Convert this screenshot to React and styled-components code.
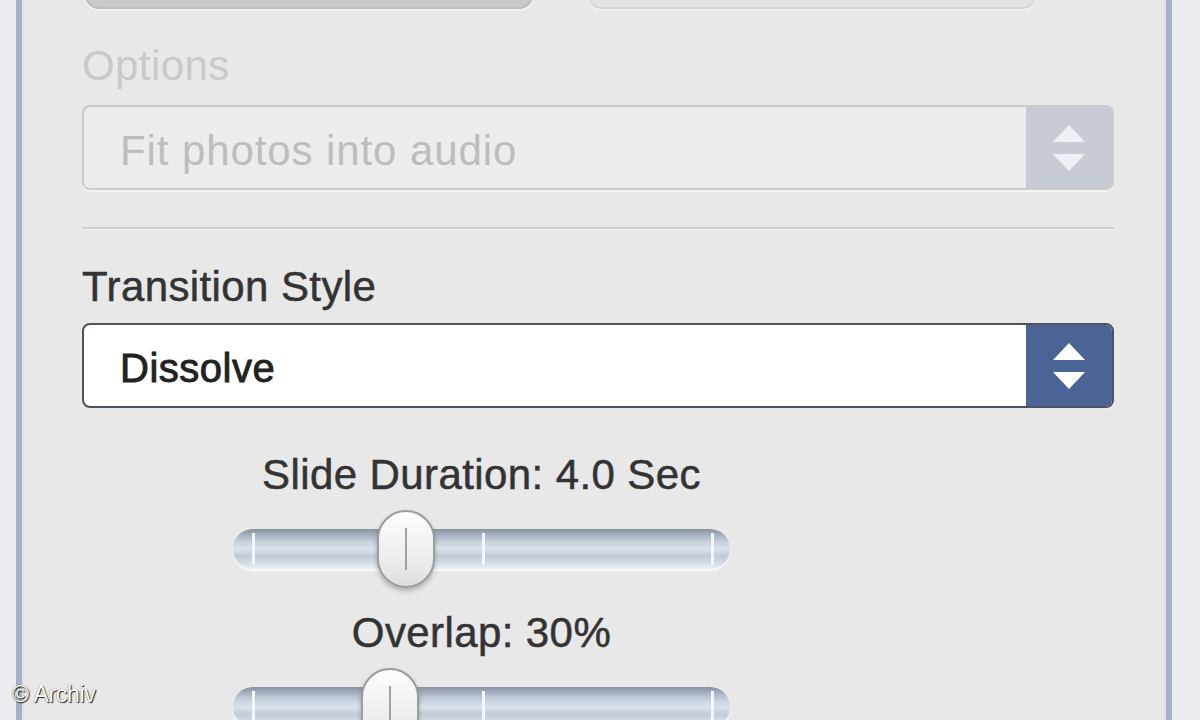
import React from "react";
import styled, { createGlobalStyle } from "styled-components";

const GlobalStyle = createGlobalStyle`
  html, body {
    margin: 0;
    padding: 0;
    background: #eaecf0;
    overflow: hidden;
  }
  body {
    font-family: "Liberation Sans", Arial, sans-serif;
  }
`;

const Screen = styled.div`
  width: 1200px;
  height: 720px;
  display: flex;
  padding-left: 16px;
  box-sizing: border-box;
  position: relative;
  overflow: hidden;
`;

const Panel = styled.div`
  width: 1156px;
  height: 720px;
  box-sizing: border-box;
  background: #e8e8e8;
  border-left: 6px solid #a7afc2;
  border-right: 6px solid #a9b1c4;
  box-shadow: inset 2px 0 0 #dde1ea, inset -2px 0 0 #dfe2ea;
  padding: 0 52px 0 60px;
  display: flex;
  flex-direction: column;
  & > * {
    flex-shrink: 0;
  }
`;

const ButtonRow = styled.div`
  display: flex;
  gap: 55px;
  padding-left: 3px;
  margin-top: -35px;
`;

const TopButton = styled.div`
  width: 448px;
  height: 44px;
  border-radius: 14px;
  box-sizing: border-box;
  background: ${p => (p.active ? "linear-gradient(#d2d2d2, #c9c9c9)" : "#e3e3e3")};
  border: 2px solid ${p => (p.active ? "#bdbdbd" : "#d6d6d6")};
  box-shadow: 0 2px 0 ${p => (p.active ? "#f4f4f4" : "#efefef")};
`;

const Label = styled.div`
  font-size: 42px;
  line-height: 42px;
  height: 42px;
  flex-shrink: 0;
  letter-spacing: 0.4px;
  color: ${p => (p.disabled ? "#c9c9c9" : "#333")};
  margin-top: ${p => p.top}px;
  ${p => (p.disabled ? "" : "-webkit-text-stroke: 0.5px #333;")}
  white-space: nowrap;
`;

const Select = styled.div`
  margin-top: ${p => p.top}px;
  height: 85px;
  display: flex;
  box-sizing: border-box;
  border-radius: 8px;
  overflow: hidden;
  border: 2px solid ${p => (p.disabled ? "#c9cccd" : "#4d525c")};
  background: ${p => (p.disabled ? "#ececec" : "#fff")};
  box-shadow: 0 2px 0 ${p => (p.disabled ? "#f2f2f4" : "#e6eaf2")};
`;

const SelectText = styled.div`
  flex: 1;
  display: flex;
  align-items: center;
  padding: 6px 0 0 36px;
  font-size: ${p => (p.disabled ? 42 : 40)}px;
  letter-spacing: ${p => (p.disabled ? 0.9 : 0.5)}px;
  color: ${p => (p.disabled ? "#bdbdbd" : "#222")};
  ${p => (p.disabled ? "" : "-webkit-text-stroke: 0.9px #222;")}
  white-space: nowrap;
`;

const Stepper = styled.div`
  width: 86px;
  display: flex;
  align-items: center;
  justify-content: center;
  background: ${p => (p.disabled ? "#c7cbd3" : "#4a6496")};
`;

const Separator = styled.div`
  margin-top: 37px;
  height: 2px;
  background: #cfcfcf;
  border-bottom: 1px solid #f6f6f6;
`;

const SliderGroup = styled.div`
  width: 497px;
  margin-left: 151px;
  display: flex;
  flex-direction: column;
  align-items: center;
  & > * {
    flex-shrink: 0;
  }
`;

const SliderBox = styled.div`
  position: relative;
  width: 100%;
  height: 78px;
  margin-top: 14px;
  display: flex;
  align-items: center;
`;

const Track = styled.div`
  position: relative;
  width: 100%;
  height: 40px;
  box-sizing: border-box;
  border-radius: 20px;
  background: linear-gradient(
    #87919f 0%,
    #a4aebd 14%,
    #c4cedb 30%,
    #dae2eb 50%,
    #c1cbd7 68%,
    #d6dde6 86%,
    #eef1f5 100%
  );
  box-shadow: 0 2px 2px rgba(255, 255, 255, 0.8);
`;

const Tick = styled.span`
  position: absolute;
  top: 4px;
  bottom: 4px;
  width: 3px;
  background: #f3f6fa;
  left: ${p => p.x}px;
`;

const Thumb = styled.div`
  position: absolute;
  top: 0;
  width: 58px;
  height: 78px;
  box-sizing: border-box;
  border-radius: 29px;
  border: 2px solid #9c9c9c;
  background: linear-gradient(#fdfdfd, #eeeeee 60%, #dedede);
  box-shadow: 0 3px 5px rgba(0, 0, 0, 0.25);
  display: flex;
  align-items: center;
  justify-content: center;
  &::after {
    content: "";
    width: 2px;
    height: 42px;
    background: #a2a2a2;
  }
`;

const Watermark = styled.div`
  position: absolute;
  left: 12px;
  bottom: 12px;
  font-size: 23px;
  color: #fff;
  letter-spacing: -0.3px;
  text-shadow: 1px 1px 1px rgba(0, 0, 0, 0.85), 0 0 1px rgba(0, 0, 0, 0.6);
`;

const Arrows = ({ color }) => (
  <svg width="34" height="50" viewBox="0 0 34 50">
    <polygon points="17,2 33,19 1,19" fill={color} />
    <polygon points="1,31 33,31 17,48" fill={color} />
  </svg>
);

const Slider = ({ pos }) => (
  <SliderBox>
    <Track>
      <Tick x={19} />
      <Tick x={249} />
      <Tick x={478} />
    </Track>
    <Thumb style={{ left: pos }} />
  </SliderBox>
);

export default function App() {
  return (
    <>
      <GlobalStyle />
      <Screen>
        <Panel>
          <ButtonRow>
            <TopButton active />
            <TopButton />
          </ButtonRow>

          <Label disabled top={36}>Options</Label>
          <Select disabled top={18}>
            <SelectText disabled>Fit photos into audio</SelectText>
            <Stepper disabled>
              <Arrows color="#eef0f4" />
            </Stepper>
          </Select>

          <Separator />

          <Label top={36}>Transition Style</Label>
          <Select top={15}>
            <SelectText>Dissolve</SelectText>
            <Stepper>
              <Arrows color="#ffffff" />
            </Stepper>
          </Select>

          <SliderGroup>
            <Label top={46}>Slide Duration: 4.0 Sec</Label>
            <Slider pos={144} />
            <Label top={24}>Overlap: 30%</Label>
            <Slider pos={128} />
          </SliderGroup>
        </Panel>
        <Watermark>© Archiv</Watermark>
      </Screen>
    </>
  );
}
